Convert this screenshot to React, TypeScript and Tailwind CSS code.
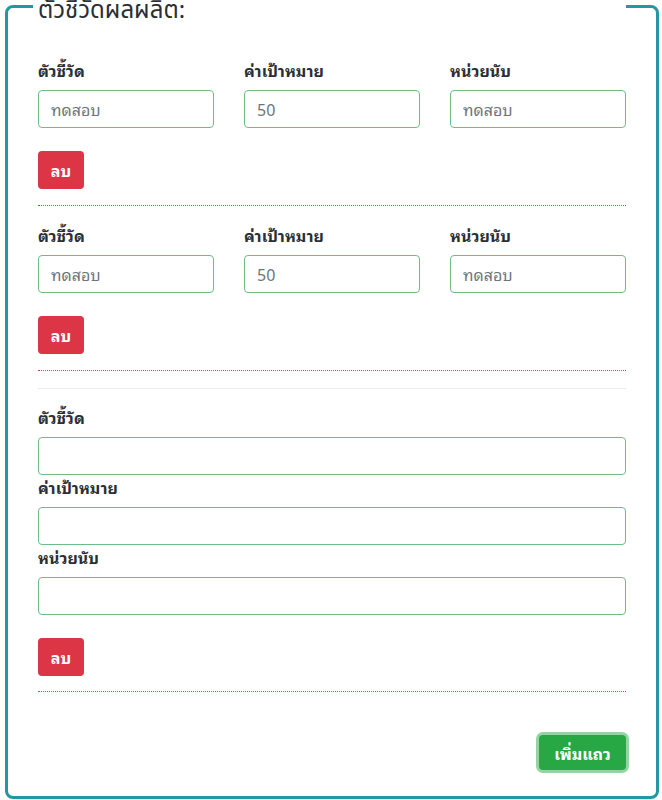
const rows = [
  { name: 'ทดสอบ', target: '50', unit: 'ทดสอบ' },
  { name: 'ทดสอบ', target: '50', unit: 'ทดสอบ' },
]

const inputCls =
  'block h-[38px] w-full rounded-[4px] border border-[#6dbd85] bg-white px-3 text-base text-[#6c757d] outline-none'
const labelCls = 'mb-2 block text-base font-bold leading-6 text-[#2b2f33]'

export default function App() {
  return (
    <div className="bg-white font-['Tahoma','Noto_Sans_Thai_Looped','Loma','Garuda','Noto_Sans_Thai','Noto_Sans',sans-serif] text-[#212529]">
      <fieldset className="-mt-[11px] ml-[5px] w-[654px] rounded-lg border-[3px] border-[#2596a4] px-[30px] pb-[26px]">
        <legend className="-ml-[5px] w-[calc(100%+5px)] px-[5px] pt-[10px] font-['Noto_Sans_Thai','Noto_Sans',sans-serif] text-2xl leading-6 text-[#2b2f33]">
          ตัวชี้วัดผลผลิต:
        </legend>

        <div className="pt-[35px]">
          {rows.map((r, i) => (
            <div key={i} className="mb-[17px] border-b border-dotted border-[#e0404e] pb-[16px]">
              <div className="grid grid-cols-3 gap-x-[30px]">
                <label className={labelCls}>ตัวชี้วัด</label>
                <label className={labelCls}>ค่าเป้าหมาย</label>
                <label className={labelCls}>หน่วยนับ</label>
                <input className={inputCls} defaultValue={r.name} />
                <input className={inputCls} defaultValue={r.target} />
                <input className={inputCls} defaultValue={r.unit} />
              </div>
              <DeleteButton />
            </div>
          ))}

          <hr className="mb-[16px] border-t border-[#e9ecef]" />

          <div className="border-b border-dotted border-[#e0404e] pb-[15px]">
            <label className={labelCls}>ตัวชี้วัด</label>
            <input className={inputCls} />
            <label className={labelCls}>ค่าเป้าหมาย</label>
            <input className={inputCls} />
            <label className={labelCls}>หน่วยนับ</label>
            <input className={inputCls} />
            <DeleteButton />
          </div>

          <div className="mt-[43px] flex justify-end">
            <button className="h-[35px] w-[87px] rounded-[4px] bg-[#28a745] text-base font-bold text-white ring-[3px] ring-[#93d4a2]">
              เพิ่มแถว
            </button>
          </div>
        </div>
      </fieldset>
    </div>
  )
}

function DeleteButton() {
  return (
    <button className="mt-[23px] h-[38px] w-[46px] rounded-[4px] bg-[#dc3545] text-base font-bold text-white">
      ลบ
    </button>
  )
}
